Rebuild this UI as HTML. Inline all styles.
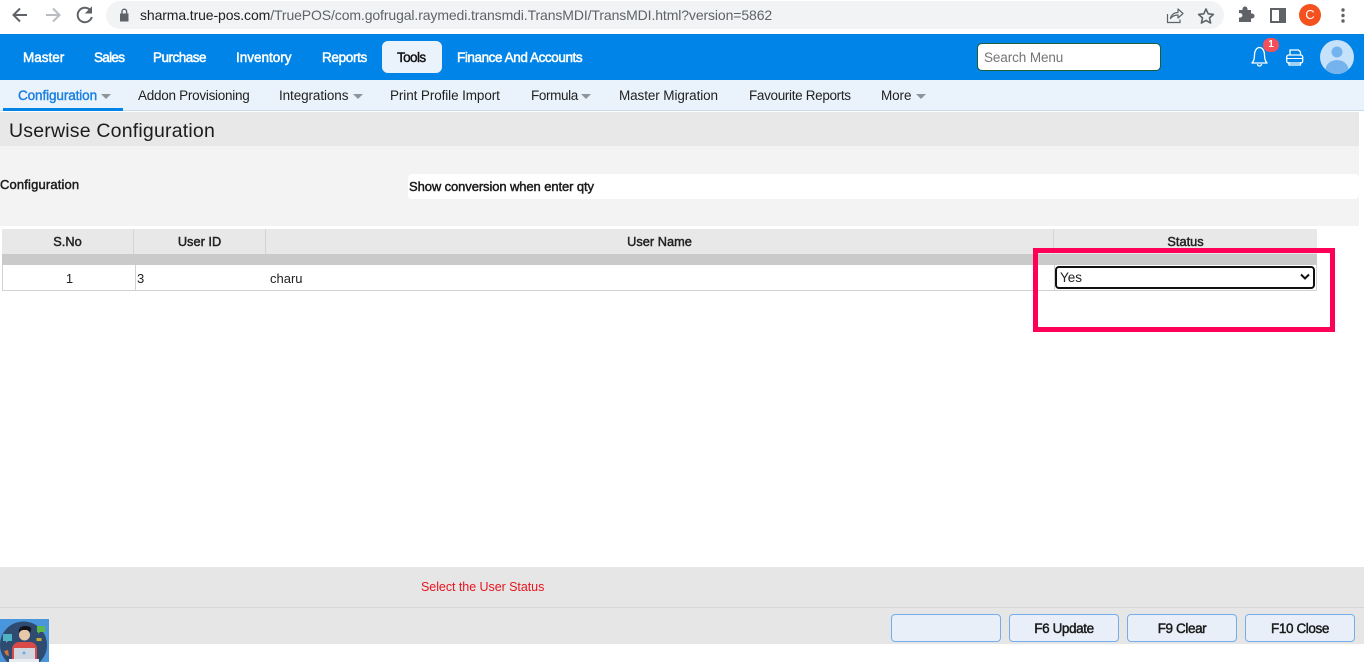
<!DOCTYPE html>
<html><head><meta charset="utf-8"><title>TruePOS</title>
<style>
html,body{margin:0;padding:0;background:#fff;width:1364px;height:662px;overflow:hidden}
body{position:relative;font-family:"Liberation Sans",Arial,sans-serif;color:#111}
.a{position:absolute}
.t{position:absolute;white-space:nowrap;line-height:18px}
.nav{color:#fff;font-size:13.5px;-webkit-text-stroke:.5px #fff;top:49px}
.sub{color:#222;font-size:13.5px;top:87px;letter-spacing:-.1px}
.tri{position:absolute;width:0;height:0;border-left:5px solid transparent;border-right:5px solid transparent;border-top:5px solid #8d959c;top:94px}
.cell{position:absolute;box-sizing:border-box}
.th{position:absolute;top:229px;height:25px;background:#e8e8e8;border-right:1px solid #d4d4d4;box-sizing:border-box;text-align:center;font-size:12.8px;-webkit-text-stroke:.45px #222;line-height:26px;color:#222}
.btn{position:absolute;top:614px;width:110px;height:28px;box-sizing:border-box;background:#e9eff8;border:1px solid #74aeea;border-radius:4px;text-align:center;font-size:13.5px;-webkit-text-stroke:.45px #1a1a1a;line-height:27px;letter-spacing:-.4px;color:#1a1a1a}
</style></head>
<body>
<!-- browser chrome -->
<div class="a" style="left:0;top:0;width:1364px;height:34px;background:#fff"></div>
<div class="a" style="left:106px;top:1px;width:1118px;height:28px;background:#f1f3f4;border-radius:14px"></div>
<svg class="a" style="left:0;top:0" width="110" height="32" viewBox="0 0 110 32" fill="none">
<path d="M27 15H14.500M20 8.500L13.500 15L20 21.500" stroke="#5f6368" stroke-width="2"/>
<path d="M46 15H58.500M53 8.500L59.500 15L53 21.500" stroke="#b9bcc0" stroke-width="2"/>
<path d="M90.500 10.500A7.200 7.200 0 1 0 91.800 17" stroke="#5f6368" stroke-width="2"/>
<path d="M91.500 7.500V13H86Z" fill="#5f6368" stroke="#5f6368" stroke-width="1"/>
</svg>
<svg class="a" style="left:118px;top:7px" width="14" height="16" viewBox="0 0 14 16"><path d="M2 6.500h8.500v8H2z" fill="#5f6368"/><path d="M4 6.500V4.500a2.300 2.300 0 0 1 4.600 0v2" fill="none" stroke="#5f6368" stroke-width="1.400"/></svg>
<div class="t" style="left:140px;top:6px;font-size:14px;color:#5f6368;letter-spacing:-.11px"><span style="color:#202124">sharma.true-pos.com</span>/TruePOS/com.gofrugal.raymedi.transmdi.TransMDI/TransMDI.html?version=5862</div>
<svg class="a" style="left:1164px;top:5px" width="54" height="22" viewBox="0 0 54 22" fill="none">
<path d="M3.500 9v8.500h12.500v-3" stroke="#5f6368" stroke-width="1.200"/>
<path d="M6.500 13.500c.5-3.500 3.500-6 7.500-6V4l5 4.500-5 4.500V10c-3 0-5.500.8-7.500 3.500z" stroke="#5f6368" stroke-width="1.200" stroke-linejoin="round"/>
<path d="M42 4l2.200 4.800 5.200.6-3.900 3.500 1.100 5.100L42 15.400 37.400 18l1.100-5.100-3.900-3.500 5.200-.6z" stroke="#5f6368" stroke-width="1.600" stroke-linejoin="round"/>
</svg>
<svg class="a" style="left:1236px;top:5px" width="120" height="22" viewBox="0 0 120 22">
<path d="M3 8h3.500V7a2.500 2.500 0 0 1 5 0v1H15v3.500h1a2.500 2.500 0 0 1 0 5h-1V20H3v-4.500h1.200a2.200 2.200 0 0 0 0-4.400H3z" fill="#5f6368" transform="translate(0 -3)"/>
<path d="M35 4h14v13H35z" fill="none" stroke="#5f6368" stroke-width="2"/>
<path d="M43 4h6v13h-6z" fill="#5f6368"/>
<circle cx="107" cy="5" r="1.700" fill="#5f6368"/><circle cx="107" cy="10.500" r="1.700" fill="#5f6368"/><circle cx="107" cy="16" r="1.700" fill="#5f6368"/>
</svg>
<div class="a" style="left:1299px;top:4px;width:22px;height:22px;border-radius:50%;background:#f4511e;color:#fff;font-size:13px;line-height:22px;text-align:center">C</div>

<!-- blue nav -->
<div class="a" style="left:0;top:34px;width:1364px;height:46px;background:#0084e8"></div>
<div class="t nav" style="left:23px">Master</div>
<div class="t nav" style="left:94px;letter-spacing:-.7px">Sales</div>
<div class="t nav" style="left:153px;letter-spacing:-.5px">Purchase</div>
<div class="t nav" style="left:236px">Inventory</div>
<div class="t nav" style="left:322px;letter-spacing:-.33px">Reports</div>
<div class="a" style="left:382px;top:41px;width:60px;height:32px;background:#eaf3fb;border-radius:6px"></div>
<div class="t nav" style="left:397px;color:#111;-webkit-text-stroke:.4px #111;letter-spacing:-.6px">Tools</div>
<div class="t nav" style="left:457px;letter-spacing:-.42px">Finance And Accounts</div>
<div class="a" style="left:977px;top:43px;width:184px;height:28px;box-sizing:border-box;background:#fff;border:1px solid #1d5d3a;border-radius:5px;color:#757575;font-size:13.500px;letter-spacing:-.1px;line-height:28px;padding-left:6px">Search Menu</div>
<svg class="a" style="left:1245px;top:36px" width="120" height="40" viewBox="0 0 120 40" fill="none">
<path d="M7 27c2-2 2.500-4 2.500-8 0-4 2-7.500 5-7.500s5 3.500 5 7.500c0 4 .5 6 2.500 8z" stroke="#fff" stroke-width="1.300" stroke-linejoin="round"/>
<path d="M12.500 28a2 2 0 0 0 4 0" stroke="#fff" stroke-width="1.300"/>
<g transform="translate(2 1)">
<path d="M43 18v-5h8.500l2 2v3" stroke="#fff" stroke-width="1.300"/>
<rect x="39.700" y="18" width="16" height="8" rx="2" stroke="#fff" stroke-width="1.300"/>
<path d="M42 25v3h11.500V25" stroke="#fff" stroke-width="1.300"/>
<path d="M40 21.500h15" stroke="#fff" stroke-width="1"/>
</g>
</svg>
<div class="a" style="left:1263px;top:38px;width:16px;height:14px;border-radius:8px;background:#f4505a;color:#fff;font-size:10px;font-weight:bold;line-height:14px;text-align:center">1</div>
<svg class="a" style="left:1320px;top:40px" width="34" height="34" viewBox="0 0 34 34">
<defs><clipPath id="c"><circle cx="17" cy="17" r="17"/></clipPath></defs>
<circle cx="17" cy="17" r="17" fill="#c6e2fb"/>
<g clip-path="url(#c)"><circle cx="17" cy="12" r="5.500" fill="#74b3ee"/><ellipse cx="17" cy="30" rx="11.500" ry="10" fill="#74b3ee"/></g>
</svg>

<!-- sub nav -->
<div class="a" style="left:0;top:80px;width:1364px;height:30px;background:#eaf3fb"></div>
<div class="a" style="left:0;top:110px;width:1364px;height:1px;background:#c5dce8"></div>
<div class="a" style="left:3px;top:108px;width:120px;height:3px;background:#0084e8"></div>
<div class="t sub" style="left:18px;color:#1a7fe0;-webkit-text-stroke:.4px #1a7fe0">Configuration</div>
<div class="tri" style="left:101px"></div>
<div class="t sub" style="left:138px;letter-spacing:-.27px">Addon Provisioning</div>
<div class="t sub" style="left:279px">Integrations</div>
<div class="tri" style="left:353px"></div>
<div class="t sub" style="left:390px">Print Profile Import</div>
<div class="t sub" style="left:531px;letter-spacing:-.38px">Formula</div>
<div class="tri" style="left:581px"></div>
<div class="t sub" style="left:619px">Master Migration</div>
<div class="t sub" style="left:749px;letter-spacing:-.33px">Favourite Reports</div>
<div class="t sub" style="left:881px">More</div>
<div class="tri" style="left:916px"></div>

<!-- title -->
<div class="a" style="left:0;top:112px;width:1359px;height:34px;background:#e8e8e8"></div>
<div class="t" style="left:9px;top:120px;font-size:19.500px;line-height:22px;color:#1c1c1c;letter-spacing:.2px">Userwise Configuration</div>
<div class="a" style="left:0;top:146px;width:1359px;height:80px;background:#f3f3f3"></div>
<div class="t" style="left:0;top:176px;font-size:13px;-webkit-text-stroke:.45px #1a1a1a;letter-spacing:.15px;color:#1a1a1a">Configuration</div>
<div class="a" style="left:408px;top:174px;width:951px;height:25px;background:#fff;border-radius:4px"></div>
<div class="t" style="left:409px;top:178px;font-size:13px;-webkit-text-stroke:.45px #1a1a1a;letter-spacing:-.1px;color:#1a1a1a">Show conversion when enter qty</div>

<!-- table -->
<div class="th" style="left:2px;width:132px">S.No</div>
<div class="th" style="left:134px;width:132px">User ID</div>
<div class="th" style="left:266px;width:788px">User Name</div>
<div class="th" style="left:1054px;width:263px;border-right:0">Status</div>
<div class="a" style="left:2px;top:254px;width:1315px;height:11px;background:#cacaca"></div>
<div class="cell" style="left:2px;top:265px;width:1315px;height:26px;background:#fff;border:1px solid #d2d2d2;border-top:0"></div>
<div class="a" style="left:135px;top:265px;width:1px;height:26px;background:#d2d2d2"></div>
<div class="a" style="left:1054px;top:265px;width:1px;height:26px;background:#d2d2d2"></div>
<div class="t" style="left:3px;width:133px;top:270px;text-align:center;font-size:13px;color:#222">1</div>
<div class="t" style="left:137px;top:270px;font-size:13px;color:#222">3</div>
<div class="t" style="left:270px;top:270px;font-size:13px;color:#222">charu</div>
<div class="a" style="left:1055px;top:266px;width:260px;height:23px;box-sizing:border-box;background:#fff;border:2px solid #101010;border-radius:4px;font-size:13.500px;line-height:19px;padding-left:3px;color:#222">Yes</div>
<svg class="a" style="left:1299px;top:273px" width="12" height="8" viewBox="0 0 12 8" fill="none"><path d="M2 1.500L6 5.500L10 1.500" stroke="#111" stroke-width="2"/></svg>
<div class="a" style="left:1033px;top:248px;width:302px;height:84px;box-sizing:border-box;border:5px solid #ff0058"></div>

<!-- footer -->
<div class="a" style="left:0;top:567px;width:1364px;height:77px;background:#e6e6e6"></div>
<div class="a" style="left:0;top:607px;width:1364px;height:1px;background:#d6d6d6"></div>
<div class="t" style="left:421px;top:578px;font-size:12.500px;line-height:19px;color:#e8141e;letter-spacing:-.05px">Select the User Status</div>
<div class="btn" style="left:891px"></div>
<div class="btn" style="left:1009px">F6 Update</div>
<div class="btn" style="left:1127px">F9 Clear</div>
<div class="btn" style="left:1245px">F10 Close</div>

<!-- avatar -->
<svg class="a" style="left:0;top:619px" width="49" height="43" viewBox="0 0 49 43">
<rect width="49" height="43" fill="#4a96dc"/>
<circle cx="23.500" cy="26" r="23.500" fill="#2f4b70"/>
<path d="M3 15h9v7H8l-2 2v-2H3z" fill="#4fb3c4"/>
<path d="M37 7h8v6h-5l-2 2v-2h-1z" fill="#5cb84a"/>
<rect x="36.500" y="19" width="5" height="3" fill="#c9a93a"/>
<path d="M4 32l4-1 1 6-3-1z" fill="#d8703c"/>
<path d="M12 43V30c0-4 4-7 7-7h11c4 0 7 3 7 7v13z" fill="#d84a48"/>
<circle cx="24.500" cy="16" r="5.500" fill="#e8c8a8"/>
<path d="M19 14c-1-5 2-7 6-7s7 1 6 4l-1 3c-1-3-3-3-5-3s-5 0-6 3z" fill="#14141c"/>
<rect x="14" y="29" width="21" height="11" fill="#cfd6e0"/>
<circle cx="24" cy="34" r="1.500" fill="#6fa6e8"/>
<rect x="9" y="40" width="30" height="3" fill="#e8ecf0"/>
</svg>
</body></html>
